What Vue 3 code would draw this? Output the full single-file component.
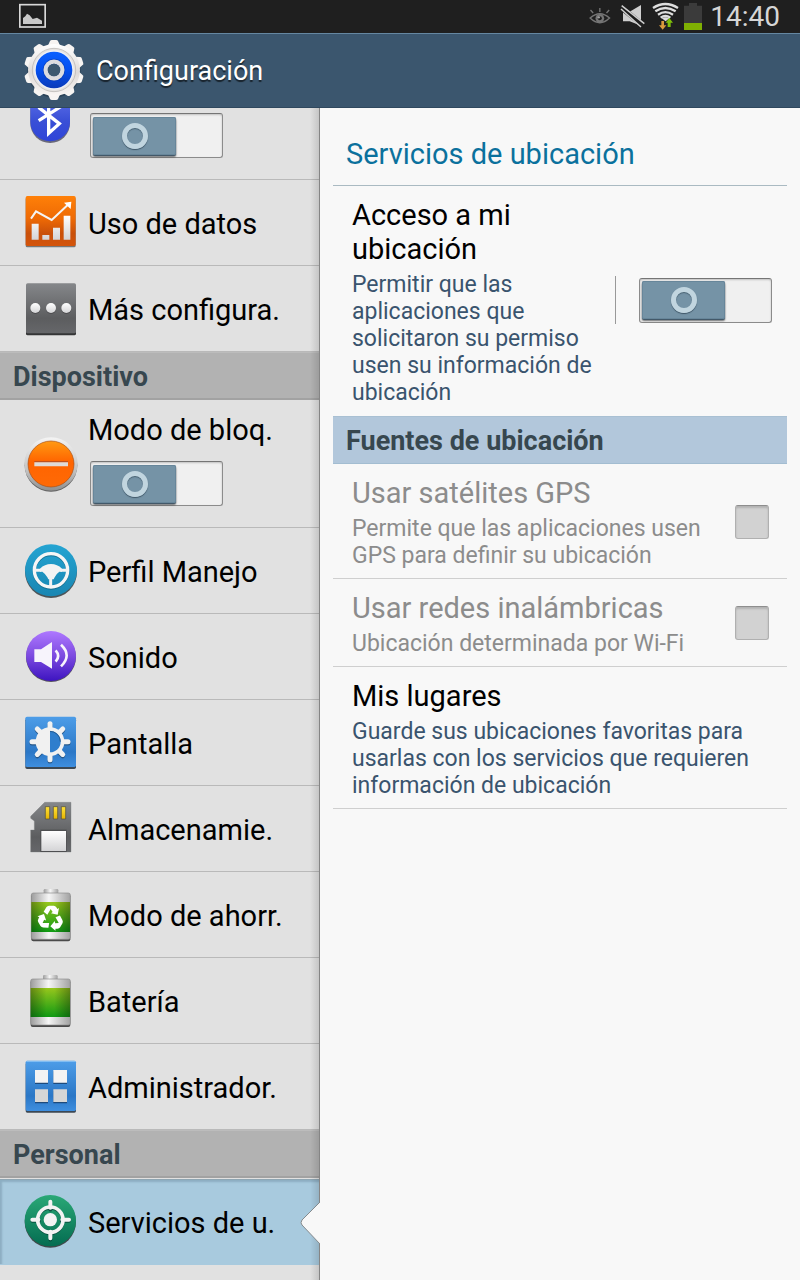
<script setup>
import { ref } from 'vue'

const groups = ref([
  {
    title: '',
    items: [
      { id: 'bluetooth', name: 'Bluetooth', toggle: true, on: false, view: '69 264 168 168' },
      { id: 'data', name: 'Uso de datos', view: '69 45 168 168' },
      { id: 'more', name: 'Más configura.', view: '69 303 168 168' },
    ],
  },
  {
    title: 'Dispositivo',
    items: [
      { id: 'block', name: 'Modo de bloq.', toggle: true, on: false, view: '69 108 168 168' },
      { id: 'drive', name: 'Perfil Manejo', view: '69 429 168 168' },
      { id: 'sound', name: 'Sonido', view: '69 57 168 168' },
      { id: 'display', name: 'Pantalla', view: '69 315 168 168' },
      { id: 'storage', name: 'Almacenamie.', view: '69 573 168 168' },
      { id: 'saving', name: 'Modo de ahorr.', view: '69 81 168 168' },
      { id: 'battery', name: 'Batería', view: '69 339 168 168' },
      { id: 'apps', name: 'Administrador.', view: '69 597 168 168' },
    ],
  },
  {
    title: 'Personal',
    items: [{ id: 'location', name: 'Servicios de u.', view: '69 252 168 168' }],
  },
])

const selected = ref('location')
const access = ref(false)
const teeth = Array.from({ length: 10 }, (_, i) => i * 36)
const rays = Array.from({ length: 8 }, (_, i) => i * 45)
</script>

<template>
  <div class="screen">
    <svg class="defs" width="0" height="0" aria-hidden="true">
      <defs>
        <linearGradient id="g-orange" x2="0" y2="1"><stop offset="0" stop-color="#ff8008" /><stop offset=".45" stop-color="#ee6a05" /><stop offset=".75" stop-color="#c9500a" /><stop offset="1" stop-color="#d4540a" /></linearGradient>
        <linearGradient id="g-gray" x2="0" y2="1"><stop offset="0" stop-color="#85878a" /><stop offset=".7" stop-color="#5c5d5f" /><stop offset="1" stop-color="#66676a" /></linearGradient>
        <linearGradient id="g-white" x2="0" y2="1"><stop offset="0" stop-color="#ffffff" /><stop offset="1" stop-color="#d4d4d6" /></linearGradient>
        <linearGradient id="g-block" x2="0" y2="1"><stop offset="0" stop-color="#ff9a12" /><stop offset=".45" stop-color="#ff6400" /><stop offset="1" stop-color="#ff6a06" /></linearGradient>
        <linearGradient id="g-rim" x2="0" y2="1"><stop offset="0" stop-color="#f4f4f4" /><stop offset=".6" stop-color="#c4c4c4" /><stop offset="1" stop-color="#8f8f8f" /></linearGradient>
        <linearGradient id="g-cyan" x2="0" y2="1"><stop offset="0" stop-color="#24a4d2" /><stop offset="1" stop-color="#1986b2" /></linearGradient>
        <linearGradient id="g-violet" x2="0" y2="1"><stop offset="0" stop-color="#ae78ff" /><stop offset=".5" stop-color="#7c4ae0" /><stop offset="1" stop-color="#3d14c0" /></linearGradient>
        <linearGradient id="g-blue" x2="0" y2="1"><stop offset="0" stop-color="#4d9de8" /><stop offset=".7" stop-color="#2b77c6" /><stop offset="1" stop-color="#3e8edf" /></linearGradient>
        <linearGradient id="g-bt" x2="0" y2="1"><stop offset="0" stop-color="#6878ee" /><stop offset=".6" stop-color="#3a50d6" /><stop offset="1" stop-color="#2f44d8" /></linearGradient>
        <linearGradient id="g-green" x2="0" y2="1"><stop offset="0" stop-color="#2aa876" /><stop offset="1" stop-color="#046c51" /></linearGradient>
        <linearGradient id="g-gold" x2="0" y2="1"><stop offset="0" stop-color="#ffe13a" /><stop offset="1" stop-color="#e6b400" /></linearGradient>
        <linearGradient id="g-metal"><stop offset="0" stop-color="#9c9c9c" /><stop offset=".45" stop-color="#f6f6f6" /><stop offset="1" stop-color="#a2a2a2" /></linearGradient>
        <linearGradient id="g-leaf" x2="0" y2="1"><stop offset="0" stop-color="#97c61c" /><stop offset="1" stop-color="#109a14" /></linearGradient>
        <linearGradient id="g-edge"><stop offset="0" stop-color="#000" stop-opacity=".32" /><stop offset=".4" stop-color="#000" stop-opacity="0" /><stop offset=".6" stop-color="#000" stop-opacity="0" /><stop offset="1" stop-color="#000" stop-opacity=".32" /></linearGradient>
        <linearGradient id="g-gear" x2="0" y2="1"><stop offset="0" stop-color="#ffffff" /><stop offset=".55" stop-color="#dedad8" /><stop offset="1" stop-color="#faf6f4" /></linearGradient>
        <linearGradient id="g-core" x2="0" y2="1"><stop offset="0" stop-color="#0a60ff" /><stop offset=".5" stop-color="#0550f0" /><stop offset="1" stop-color="#0a3ab8" /></linearGradient>
      </defs>
    </svg>

    <div class="status">
      <svg class="shot" viewBox="57 0 84 99" aria-hidden="true">
        <rect x="59.500" y="14" width="76" height="67" fill="none" stroke="#d8d8d8" stroke-width="5" />
        <path d="M69 72V54l7-5 5-8 8 5 9 11 13-4 15 9v10z" fill="#c9c9c9" />
      </svg>
      <div class="indicators">
        <svg class="wide" viewBox="87 0 81 99" aria-hidden="true">
          <path d="M92 54q29-26 58 0q-29 28-58 0z" fill="none" stroke="#757575" stroke-width="4.500" />
          <path d="M121 24v12M93 30l8 9M149 30l-8 9" stroke="#757575" stroke-width="4" />
          <circle cx="121" cy="55" r="13" fill="#757575" />
          <circle cx="121" cy="55" r="6" fill="#1f1f1f" /><circle cx="118" cy="52" r="3.500" fill="#a0a0a0" />
        </svg>
        <svg class="wide" viewBox="180 0 84 99" aria-hidden="true">
          <path d="M189 35h20l34-20v62l-34-13h-20z" fill="#cfcfcf" />
          <path d="M183 22l69 56" stroke="#1f1f1f" stroke-width="16" />
          <path d="M185 17l68 54M183 27l60 54" stroke="#cfcfcf" stroke-width="4.500" />
        </svg>
        <svg class="wide" viewBox="276 0 84 99" aria-hidden="true">
          <g fill="none" stroke="#dedede" stroke-width="7"><path d="M279 24q37-24 75 0" /><path d="M286 34q30-20 61 0" /><path d="M294 44q22-15 45 0" /><path d="M302 53q14-10 29 0" /></g>
          <path d="M305 55q11-7 23 0l-11 9z" fill="#dedede" />
          <path d="M304 63h8v13h7l-11 13-11-13h7z" fill="#d99a3c" />
          <path d="M323 81h9V68h7l-11-14-11 14h6z" fill="#7fbf0a" />
        </svg>
        <svg class="cell" viewBox="372 0 54 99" aria-hidden="true">
          <path d="M372 17h15V9h24v8h15v73h-54z" fill="#3b3b3b" /><path d="M372 69h54v21h-54z" fill="#7fb003" />
        </svg>
        <time class="clock">14:40</time>
      </div>
    </div>

    <header class="bar">
      <svg class="gear" viewBox="66 115 192 192" aria-hidden="true">
        <g fill="#2c4358" transform="translate(0 3)"><circle cx="162" cy="208" r="80" /></g>
        <g fill="#f7f4f2">
          <path v-for="a in teeth" :key="a" :transform="`rotate(${a} 162 208)`" d="M143 137l6-14q1-5 6-5h14q5 0 6 5l6 14z" />
        </g>
        <circle cx="162" cy="208" r="78" fill="url(#g-gear)" />
        <circle cx="162" cy="208" r="65" fill="#e6e3e1" stroke="#b4b0ae" stroke-width="2" />
        <circle cx="162" cy="208" r="59" fill="#eef0f6" />
        <circle cx="162" cy="208" r="55" fill="url(#g-core)" />
        <circle cx="162" cy="208" r="25" fill="none" stroke="#0839a8" stroke-width="17" opacity=".6" />
        <circle cx="162" cy="208" r="25" fill="none" stroke="#dcdce0" stroke-width="13" />
        <circle cx="162" cy="208" r="19" fill="#3c5870" />
      </svg>
      <h1>Configuración</h1>
    </header>

    <div class="panes">
      <nav class="side">
        <section v-for="g in groups" :key="g.title">
          <h2 v-if="g.title" class="group">{{ g.title }}</h2>
          <div
            v-for="it in g.items"
            :key="it.id"
            :class="{ clipped: it.id === 'bluetooth' }"
          >
            <div class="item" :class="{ tall: it.toggle, selected: it.id === selected }">
              <svg class="icon" :viewBox="it.view" aria-hidden="true">
                <template v-if="it.id === 'bluetooth'">
                  <rect x="91" y="270" width="119" height="159" rx="59" fill="#4b4b60" opacity=".8" />
                  <rect x="91" y="268" width="119" height="156" rx="59" fill="url(#g-bt)" />
                  <path d="M116 322l62 49-32 29v-98l30 22-60 38" fill="none" stroke="#fff" stroke-width="10" />
                </template>
                <template v-else-if="it.id === 'data'">
                  <rect x="77" y="52" width="150" height="150" rx="5" fill="#777" />
                  <rect x="77" y="48" width="150" height="150" rx="5" fill="url(#g-orange)" />
                  <path d="M95 131h21v48H95zM127 165h21v14h-21zM159 143h21v36h-21zM191 107h20v72h-20z" fill="url(#g-white)" />
                  <path d="M93 116l15-22 47 26 48-45" fill="none" stroke="#f4f4f4" stroke-width="6" /><path d="M192 68l22-3-2 22z" fill="#fff" />
                </template>
                <template v-else-if="it.id === 'more'">
                  <rect x="78" y="315" width="150" height="151" rx="5" fill="#343536" />
                  <rect x="78" y="310" width="150" height="150" rx="5" fill="url(#g-gray)" />
                  <g fill="#4d4d4f"><circle cx="106" cy="387" r="15" /><circle cx="153" cy="387" r="15" /><circle cx="199" cy="387" r="15" /></g>
                  <g fill="url(#g-white)"><circle cx="106" cy="384" r="15" /><circle cx="153" cy="384" r="15" /><circle cx="199" cy="384" r="15" /></g>
                </template>
                <template v-else-if="it.id === 'block'">
                  <circle cx="153" cy="196" r="79" fill="#5f5f5f" />
                  <circle cx="153" cy="192" r="80" fill="url(#g-rim)" />
                  <circle cx="153" cy="192" r="69" fill="url(#g-block)" stroke="#a94d12" stroke-width="2" />
                  <path d="M103 184h101v3H103z" fill="#a84d2b" /><path d="M103 187h101v12H103z" fill="#dedbd9" />
                </template>
                <template v-else-if="it.id === 'drive'">
                  <circle cx="153" cy="516" r="78" fill="#4c5559" />
                  <circle cx="153" cy="511" r="78" fill="url(#g-cyan)" />
                  <circle cx="153" cy="514" r="50" fill="none" stroke="#126380" stroke-width="10" opacity=".7" />
                  <circle cx="153" cy="511" r="50" fill="none" stroke="#f6f6f6" stroke-width="10" />
                  <path d="M104 511h20M181 511h21M152 530v30" stroke="#f3f3f3" stroke-width="9" />
                  <path d="M120 506q14-14 33-14t33 14v9h-8q-8 5-14 17l-3 6h-16l-3-6q-7-12-15-17h-7z" fill="#f3f3f3" />
                </template>
                <template v-else-if="it.id === 'sound'">
                  <circle cx="153" cy="141" r="75" fill="#55505f" />
                  <circle cx="153" cy="138" r="75" fill="url(#g-violet)" />
                  <path d="M103 118h20l33-22v80l-33-20h-20z" fill="#f7f4fc" />
                  <path d="M167 121q15 17 0 34M183 104q34 32 0 65" fill="none" stroke="#f7f4fc" stroke-width="8" />
                </template>
                <template v-else-if="it.id === 'display'">
                  <rect x="76" y="326" width="152" height="151" rx="5" fill="#3c4854" />
                  <rect x="76" y="320" width="152" height="151" rx="5" fill="url(#g-blue)" />
                  <g stroke="#24496e" stroke-width="15" stroke-linecap="round" opacity=".7" transform="translate(0 4)"><path v-for="a in rays" :key="a" :transform="`rotate(${a} 150 395)`" d="M150 341v16" /></g>
                  <g stroke="#f1f1f1" stroke-width="15" stroke-linecap="round"><path v-for="a in rays" :key="a" :transform="`rotate(${a} 150 395)`" d="M150 341v16" /></g>
                  <circle cx="150" cy="395" r="43" fill="#f1f1f1" /><path d="M150 363a32 32 0 0 1 0 64z" fill="#2f7ecd" /><path d="M150 364a31 31 0 0 1 31 31" fill="none" stroke="#245b92" stroke-width="3" />
                </template>
                <template v-else-if="it.id === 'storage'">
                  <path d="M92 619l42-42h79v149H92v-66h11v-27l-11-8z" fill="url(#g-gray)" stroke="#77787a" />
                  <g fill="url(#g-gold)" stroke="#4b4b3f" stroke-width="2"><path d="M136 590h13v37h-13zM160 590h13v37h-13zM184 590h13v37h-13z" /></g>
                  <path d="M121 659h79v67h-79z" fill="#4e4f51" /><path d="M124 663h74v60h-74z" fill="url(#g-white)" />
                </template>
                <template v-else-if="it.id === 'saving'">
                  <rect x="131" y="87" width="44" height="18" rx="4" fill="url(#g-metal)" />
                  <rect x="94" y="103" width="117" height="141" rx="6" fill="#4a4a4a" />
                  <rect x="94" y="99" width="117" height="139" rx="6" fill="url(#g-metal)" stroke="#8d8d8d" stroke-width="2" />
                  <rect x="94" y="126" width="116" height="90" fill="url(#g-leaf)" /><rect x="94" y="126" width="116" height="90" fill="url(#g-edge)" />
                  <g fill="#fff">
                    <path v-for="a in [0, 120, 240]" :key="a" :transform="`rotate(${a} 152 175)`" d="M131 155l8-13q3-5 8-5h14q5 0 8 5l3 5 5-3-4 20-20-4 5-4-6-9-10 17z" />
                  </g>
                </template>
                <template v-else-if="it.id === 'battery'">
                  <rect x="129" y="345" width="44" height="18" rx="4" fill="url(#g-metal)" />
                  <rect x="92" y="361" width="119" height="140" rx="6" fill="#4a4a4a" />
                  <rect x="92" y="357" width="119" height="138" rx="6" fill="url(#g-metal)" stroke="#8d8d8d" stroke-width="2" />
                  <rect x="92" y="384" width="118" height="87" fill="url(#g-leaf)" /><rect x="92" y="384" width="118" height="87" fill="url(#g-edge)" />
                </template>
                <template v-else-if="it.id === 'apps'">
                  <rect x="77" y="607" width="151" height="151" rx="5" fill="#3c4854" />
                  <rect x="77" y="602" width="151" height="151" rx="5" fill="url(#g-blue)" /><path d="M79 604h147" stroke="#8cc4f4" stroke-width="3" />
                  <path d="M105 634h39v38h-39zM160 634h41v38h-41zM105 692h39v38h-39zM160 692h41v38h-41z" fill="#1d4a7c" />
                  <path d="M105 630h39v38h-39zM160 630h41v38h-41z" fill="#f3f3f3" /><path d="M105 688h39v38h-39zM160 688h41v38h-41z" fill="#d6d6d6" />
                </template>
                <template v-else>
                  <circle cx="151" cy="336" r="77" fill="#41484a" />
                  <circle cx="151" cy="332" r="77" fill="url(#g-green)" />
                  <g fill="none" stroke="#0a5140" stroke-linecap="round" transform="translate(0 4)"><circle cx="151" cy="329" r="38" stroke-width="9" /><path d="M151 275v20M151 363v22M97 329h20M185 329h22" stroke-width="11" /></g>
                  <g fill="none" stroke="#f3f3f3" stroke-linecap="round"><circle cx="151" cy="329" r="38" stroke-width="11" /><path d="M151 275v18M151 365v20M97 329h18M187 329h20" stroke-width="12" /></g>
                  <circle cx="151" cy="329" r="20" fill="#f3f3f3" />
                </template>
              </svg>
              <div class="body">
                <a v-if="it.id !== 'bluetooth'" class="name" href="#" @click.prevent="selected = it.id">{{ it.name }}</a>
                <button v-if="it.toggle" class="switch" type="button" role="switch" :aria-checked="it.on" :aria-label="it.name" @click="it.on = !it.on">
                  <span class="thumb"><span class="ring"></span></span>
                </button>
              </div>
            </div>
          </div>
        </section>
        <svg class="notch" viewBox="0 0 20 42" aria-hidden="true">
          <path d="M20 0L2 18q-2 3 0 5l18 19z" fill="#f8f8f8" /><path d="M20 0L2 18q-2 3 0 5l18 19" fill="none" stroke="#858a8d" />
        </svg>
      </nav>

      <main class="detail">
        <h2 class="heading">Servicios de ubicación</h2>
        <section class="pref">
          <div class="text">
            <h3 id="access-title">Acceso a mi ubicación</h3>
            <p>Permitir que las aplicaciones que solicitaron su permiso usen su información de ubicación</p>
          </div>
          <div class="control">
            <button class="switch" type="button" role="switch" :aria-checked="access" aria-labelledby="access-title" @click="access = !access">
              <span class="thumb"><span class="ring"></span></span>
            </button>
          </div>
        </section>
        <h2 class="group sources">Fuentes de ubicación</h2>
        <label class="pref ruled disabled">
          <span class="text"><span class="title">Usar satélites GPS</span><span class="note">Permite que las aplicaciones usen GPS para definir su ubicación</span></span>
          <input type="checkbox" disabled />
        </label>
        <label class="pref ruled disabled">
          <span class="text"><span class="title">Usar redes inalámbricas</span><span class="note">Ubicación determinada por Wi-Fi</span></span>
          <input type="checkbox" disabled />
        </label>
        <section class="pref ruled">
          <div class="text">
            <h3>Mis lugares</h3>
            <p>Guarde sus ubicaciones favoritas para usarlas con los servicios que requieren información de ubicación</p>
          </div>
        </section>
      </main>
    </div>
  </div>
</template>

<style>
body {
  margin: 0;
  background: #f8f8f8;
}
</style>

<style scoped>
* {
  box-sizing: border-box;
}
.screen {
  display: flex;
  flex-direction: column;
  height: 100vh;
  overflow: hidden;
  background: #f8f8f8;
  color: #000;
  font-family: Roboto, "Noto Sans", sans-serif;
  font-size: 29px;
  line-height: 34px;
}
.defs {
  position: absolute;
}
h1, h2, h3, p {
  margin: 0;
  font-size: inherit;
  font-weight: 400;
}
.status {
  display: flex;
  flex: none;
  justify-content: space-between;
  height: 33px;
  padding: 0 20px 0 19px;
  background: #1f1f1f;
}
.shot, .wide {
  width: 28px;
  height: 33px;
}
.cell {
  width: 18px;
  height: 33px;
}
.indicators {
  display: flex;
  gap: 4px;
}
.clock {
  padding-left: 4px;
  color: #d6d6d6;
  font-size: 28px;
}
.bar {
  display: flex;
  flex: none;
  align-items: center;
  gap: 10px;
  height: 75px;
  padding-left: 22px;
  border-top: 1px solid #6587a1;
  border-bottom: 1px solid #2f485e;
  background: #3b566e;
  color: #fff;
  font-size: 27px;
  text-shadow: 0 2px 1px rgba(0, 0, 0, 0.6);
}
.gear {
  width: 64px;
  height: 64px;
}
.panes {
  display: flex;
  flex: 1;
  min-height: 0;
}
.side {
  position: relative;
  flex: none;
  width: 40%;
  overflow: hidden;
  background: #e1e1e1;
}
.side::after {
  content: "";
  position: absolute;
  inset: 0 0 0 auto;
  width: 9px;
  border-right: 1px solid #858585;
  background: linear-gradient(to right, transparent, rgba(0, 0, 0, 0.12));
  pointer-events: none;
}
.clipped {
  display: flex;
  align-items: flex-end;
  height: 72px;
  overflow: hidden;
}
.clipped .item {
  flex: 1;
}
.item {
  display: flex;
  align-items: center;
  gap: 9px;
  height: 86px;
  padding: 1px 0 0 23px;
  border-bottom: 1px solid #b9b9b9;
}
.item.tall {
  height: 128px;
}
.item.selected {
  margin-top: 1px;
  padding-top: 0;
  border-top: 1px solid #8fa6b3;
  border-bottom-color: #a8cade;
  background: #a8cade;
  box-shadow: inset 2px 2px 2px rgba(60, 90, 110, 0.25);
}
.icon {
  flex: none;
  width: 56px;
  height: 56px;
}
.body {
  display: flex;
  flex-direction: column;
  gap: 14px;
  align-items: flex-start;
}
.tall .body {
  align-self: flex-end;
  padding-bottom: 21px;
}
.name {
  padding-top: 2px;
  color: inherit;
  text-decoration: none;
  white-space: nowrap;
}
.switch {
  width: 133px;
  height: 45px;
  padding: 2px;
  border: 1px solid #8b8b8b;
  border-top-color: #757575;
  border-radius: 3px;
  background: #f0f0f0;
  box-shadow: inset 0 1px 2px rgba(0, 0, 0, 0.2);
}
.side .switch {
  margin-left: 2px;
}
.thumb {
  display: flex;
  align-items: center;
  justify-content: center;
  width: 83px;
  height: 38px;
  border-radius: 2px;
  background: #7593a6;
  box-shadow: inset 0 0 0 1px #67869a, 0 1px 1px #3d5566, 0 2px 2px rgba(0, 0, 0, 0.5);
}
.switch[aria-checked="true"] .thumb {
  margin-left: auto;
}
.ring {
  width: 26px;
  height: 26px;
  border: 5px solid #c1d5df;
  border-radius: 50%;
  box-shadow: 0 1px 1px rgba(40, 60, 75, 0.7), inset 0 1px 1px rgba(40, 60, 75, 0.6);
}
.group {
  height: 48px;
  padding: 9px 13px 0;
  border-top: 1px solid #bcbcbc;
  border-bottom: 2px solid #a2a2a2;
  background: #b2b2b2;
  color: #37474f;
  font-size: 27px;
  font-weight: 700;
  line-height: 31px;
}
.notch {
  position: absolute;
  right: 0;
  bottom: 36px;
  z-index: 1;
  width: 20px;
  height: 42px;
}
.detail {
  flex: 1;
  min-width: 0;
  padding: 0 13px;
}
.heading {
  padding: 29px 13px 14px;
  border-bottom: 1px solid #aabac2;
  color: #0b719d;
}
.sources {
  border-top-color: #a9c0d3;
  border-bottom: 1px solid #a3bdd1;
  background: #b2c7db;
}
.pref {
  display: flex;
  align-items: center;
  justify-content: space-between;
  padding: 12px 15px 10px 19px;
}
.ruled {
  padding-bottom: 9px;
  border-bottom: 1px solid #cfcfcf;
}
.text {
  display: flex;
  flex: 1;
  flex-direction: column;
  gap: 5px;
  min-width: 0;
}
.text p, .note {
  color: #3a546e;
  font-size: 23px;
  line-height: 27px;
}
.disabled, .disabled .note {
  color: #8c8c8c;
}
.control {
  display: flex;
  align-items: center;
  flex: none;
  height: 48px;
  margin: 0 0 4px 12px;
  padding-left: 23px;
  border-left: 1px solid #999;
}
input {
  appearance: none;
  flex: none;
  width: 34px;
  height: 34px;
  margin: 0 3px 2px 12px;
  border: 1px solid #b0b0b0;
  border-top-color: #8e8e8e;
  border-radius: 3px;
  background: #d2d2d2;
  box-shadow: inset 0 2px 2px rgba(0, 0, 0, 0.15);
}
</style>
